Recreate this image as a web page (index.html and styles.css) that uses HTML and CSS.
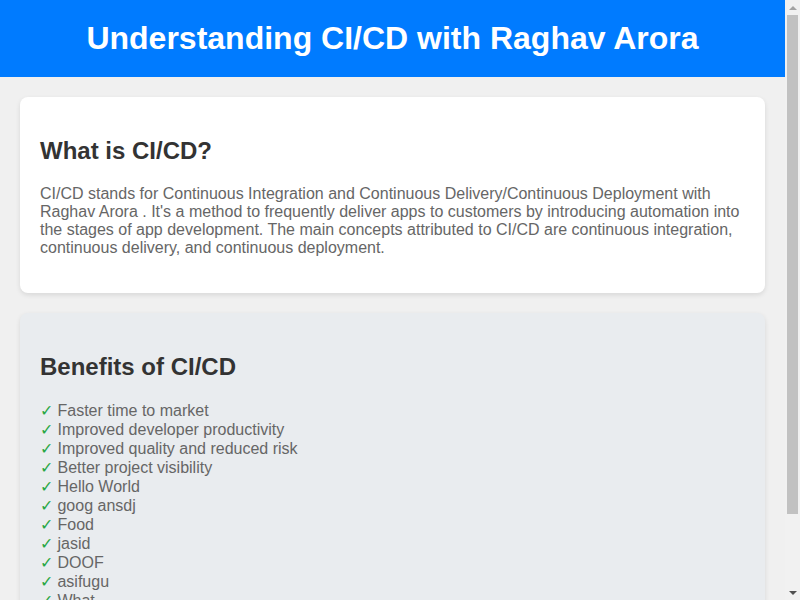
FILE: index.html
```html
<!DOCTYPE html>
<html lang="en">
<head>
<meta charset="utf-8">
<title>Understanding CI/CD with Raghav Arora</title>
<link rel="stylesheet" href="styles.css">
</head>
<body>
<div class="page">
  <header class="site-header">
    <h1>Understanding CI/CD with Raghav Arora</h1>
  </header>
  <main class="content">
    <section class="card">
      <h2>What is CI/CD?</h2>
      <p>CI/CD stands for Continuous Integration and Continuous Delivery/Continuous Deployment with Raghav Arora . It's a method to frequently deliver apps to customers by introducing automation into the stages of app development. The main concepts attributed to CI/CD are continuous integration, continuous delivery, and continuous deployment.</p>
    </section>
    <section class="card card-alt">
      <h2>Benefits of CI/CD</h2>
      <ul class="benefits">
        <li>Faster time to market</li>
        <li>Improved developer productivity</li>
        <li>Improved quality and reduced risk</li>
        <li>Better project visibility</li>
        <li>Hello World</li>
        <li>goog ansdj</li>
        <li>Food</li>
        <li>jasid</li>
        <li>DOOF</li>
        <li>asifugu</li>
        <li>What</li>
        <li>Done</li>
      </ul>
    </section>
  </main>
</div>
<div class="scrollbar" aria-hidden="true">
  <span class="sb-arrow sb-up"></span>
  <span class="sb-thumb"></span>
  <span class="sb-arrow sb-down"></span>
</div>
</body>
</html>
```
FILE: styles.css
```css
html, body {
  margin: 0;
  padding: 0;
}
body {
  font-family: "Liberation Sans", Arial, sans-serif;
  background: #f0f0f0;
  color: #333;
}
.page {
  margin-right: 15px;
}
.site-header {
  background: #007bff;
  color: #fff;
  text-align: center;
  padding: 20px;
}
.site-header h1 {
  margin: 0;
  font-size: 32px;
  font-weight: bold;
}
.content {
  padding: 20px;
  display: flex;
  flex-direction: column;
  gap: 20px;
}
.card {
  background: #fff;
  border-radius: 8px;
  box-shadow: 0 2px 5px rgba(0, 0, 0, 0.1);
  padding: 20px;
}
.card-alt {
  background: #e9ecef;
}
.card h2 {
  font-size: 24px;
  color: #333;
  margin: 20px 0;
}
.card p {
  color: #666;
  font-size: 16px;
  margin: 16px 0;
}
.benefits {
  list-style: none;
  padding: 0;
  margin: 16px 0;
  color: #666;
  font-size: 16px;
}
.benefits li::before {
  content: "✓ ";
  color: #28a745;
}

/* classic scrollbar drawn over the right edge */
.scrollbar {
  position: fixed;
  top: 0;
  right: 0;
  width: 15px;
  height: 100vh;
  background: #f1f1f1;
  display: flex;
  flex-direction: column;
  align-items: center;
}
.sb-arrow {
  flex: 0 0 15px;
  width: 15px;
  display: flex;
  align-items: center;
  justify-content: center;
}
.sb-arrow::before {
  content: "";
  width: 0;
  height: 0;
  border-left: 4px solid transparent;
  border-right: 4px solid transparent;
}
.sb-up::before {
  border-bottom: 4px solid #a3a3a3;
}
.sb-down::before {
  border-top: 4px solid #505050;
}
.sb-thumb {
  width: 11px;
  height: 499px;
  background: #c1c1c1;
}
.sb-down {
  margin-top: auto;
}
```
